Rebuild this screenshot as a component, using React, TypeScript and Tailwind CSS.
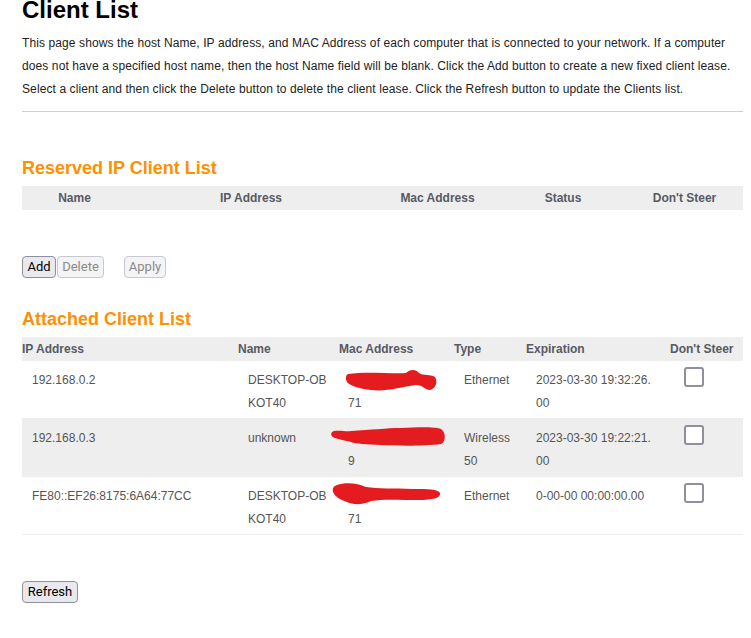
import React from 'react'

type Row = {
  ip: string
  name: string[]
  mac: string
  type: string[]
  exp: string[]
  scribble: { left: string; top: string; w: number; h: number; d: string }
}

const rows: Row[] = [
  {
    ip: '192.168.0.2',
    name: ['DESKTOP-OB', 'KOT40'],
    mac: '71',
    type: ['Ethernet'],
    exp: ['2023-03-30 19:32:26.', '00'],
    scribble: {
      left: 'left-[7px]', top: 'top-[9px]', w: 91, h: 21,
      d: 'M2 4 C 20 1, 45 4, 60 3 C 64 -1, 70 -1, 73 3 C 78 6, 84 4, 89 7 C 92 11, 90 19, 84 20 C 79 20, 77 15, 70 15 C 55 17, 40 22, 25 20 C 15 19, 4 16, 1 12 C -1 8, 0 5, 2 4 Z',
    },
  },
  {
    ip: '192.168.0.3',
    name: ['unknown'],
    mac: '9',
    type: ['Wireless', '50'],
    exp: ['2023-03-30 19:22:21.', '00'],
    scribble: {
      left: 'left-[-8px]', top: 'top-[8px]', w: 114, h: 19,
      d: 'M3 4 C 10 3, 16 5, 20 4 C 40 3, 55 1, 70 1 C 90 0, 105 0, 110 2 C 115 5, 115 15, 110 17 C 95 19, 70 19, 50 18 C 35 17, 25 17, 20 15 C 12 13, 5 12, 2 10 C -1 8, 0 5, 3 4 Z',
    },
  },
  {
    ip: 'FE80::EF26:8175:6A64:77CC',
    name: ['DESKTOP-OB', 'KOT40'],
    mac: '71',
    type: ['Ethernet'],
    exp: ['0-00-00 00:00:00.00'],
    scribble: {
      left: 'left-[-6px]', top: 'top-[6px]', w: 107, h: 22,
      d: 'M4 2 C 12 -1, 25 0, 33 4 C 45 6, 60 5, 80 6 C 95 6, 105 6, 107 10 C 108 15, 100 17, 85 17 C 65 17, 50 16, 38 18 C 30 22, 20 22, 14 19 C 8 17, 2 14, 0 9 C -1 5, 1 3, 4 2 Z',
    },
  },
]

function Btn({ label, width, disabled }: { label: string; width: string; disabled?: boolean }) {
  return (
    <button
      disabled={disabled}
      className={`${width} h-[22px] flex items-center justify-center rounded-[4px] border text-[13px] leading-[20px] font-['Roboto',sans-serif] ${
        disabled
          ? 'border-[#c8c8cf] bg-[#f4f4f6] text-[#8a8a8a]'
          : 'border-[#8f8f9d] bg-[#e9e9ed] text-black'
      }`}
    >
      {label}
    </button>
  )
}

export default function App() {
  return (
    <div className="pl-[22px] pr-[8px] pb-[40px] bg-white font-['Liberation_Sans',Arial,sans-serif]">
      <h1 className="text-[24px] leading-[24px] font-bold text-black -mt-[2px]">Client List</h1>
      <p className="mt-[10px] text-[12px] leading-[23px] tracking-[0.1px] text-[#222] whitespace-nowrap">
        This page shows the host Name, IP address, and MAC Address of each computer that is connected to your network. If a computer
        <br />
        does not have a specified host name, then the host Name field will be blank. Click the Add button to create a new fixed client lease.
        <br />
        Select a client and then click the Delete button to delete the client lease. Click the Refresh button to update the Clients list.
      </p>
      <div className="mt-[10px] border-t border-[#cfcfcf]" />

      {/* Reserved IP */}
      <h2 className="mt-[46px] text-[18px] leading-[21px] font-bold text-[#ff9000]">Reserved IP Client List</h2>
      <div className="mt-[7px] grid grid-cols-[105px_248px_125px_126px_117px] h-[24px] bg-[#eeeeee] text-[12px] leading-[24px] font-bold text-[#575a63] text-center">
        <div>Name</div>
        <div>IP Address</div>
        <div>Mac Address</div>
        <div>Status</div>
        <div>Don't Steer</div>
      </div>
      <div className="mt-[46px] flex h-[22px]">
        <Btn label="Add" width="w-[34px]" />
        <div className="ml-[1px] flex">
          <Btn label="Delete" width="w-[47px]" disabled />
        </div>
        <div className="ml-[20px] flex">
          <Btn label="Apply" width="w-[42px]" disabled />
        </div>
      </div>

      {/* Attached */}
      <h2 className="mt-[31px] text-[18px] leading-[21px] font-bold text-[#ff9000]">Attached Client List</h2>
      <div className="mt-[7px] grid grid-cols-[216px_101px_115px_72px_144px_73px] h-[24px] bg-[#eeeeee] text-[12px] leading-[24px] font-bold text-[#575a63]">
        <div>IP Address</div>
        <div>Name</div>
        <div>Mac Address</div>
        <div>Type</div>
        <div>Expiration</div>
        <div>Don't Steer</div>
      </div>
      {rows.map((r, i) => (
        <div
          key={r.ip}
          className={`grid grid-cols-[216px_101px_115px_72px_144px_73px] border-b border-[#eeeeee] text-[12px] leading-[23px] text-[#555] ${
            i % 2 === 1 ? 'bg-[#eeeeee]' : 'bg-white'
          }`}
        >
          <div className="pl-[10px] pt-[8px] pb-[3px]">{r.ip}</div>
          <div className="pl-[10px] pt-[8px] pb-[3px]">
            {r.name.map((n) => <div key={n}>{n}</div>)}
          </div>
          <div className="relative pl-[9px] pt-[8px] pb-[3px]">
            <div>&nbsp;</div>
            <div>{r.mac}</div>
            <svg
              className={`absolute ${r.scribble.left} ${r.scribble.top} overflow-visible`}
              width={r.scribble.w}
              height={r.scribble.h}
              viewBox={`0 0 ${r.scribble.w} ${r.scribble.h}`}
            >
              <path d={r.scribble.d} fill="#e41c1f" />
            </svg>
          </div>
          <div className="pl-[10px] pt-[8px] pb-[3px]">
            {r.type.map((t) => <div key={t}>{t}</div>)}
          </div>
          <div className="pl-[10px] pt-[8px] pb-[3px]">
            {r.exp.map((t) => <div key={t}>{t}</div>)}
          </div>
          <div className="pl-[14px] pt-[6px]">
            <div className="w-[20px] h-[20px] rounded-[3px] border-2 border-[#8f8f9d] bg-white" />
          </div>
        </div>
      ))}

      <div className="mt-[46px] flex">
        <Btn label="Refresh" width="w-[56px]" />
      </div>
    </div>
  )
}
